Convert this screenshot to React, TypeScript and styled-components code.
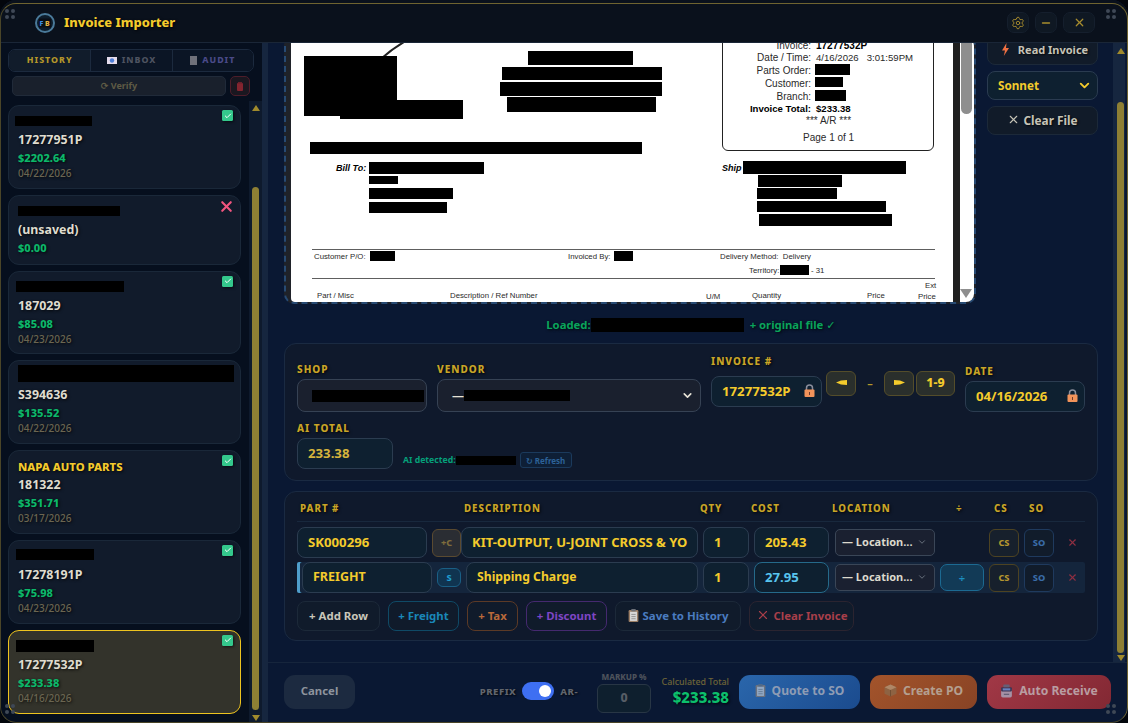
import React from "react";
import styled, { createGlobalStyle } from "styled-components";
import { Check, ChevronDown, Minus, Settings, X } from "lucide-react";

const FONT = `"Noto Sans", "DejaVu Sans", sans-serif`;
const GOLD = "#f4cb2c";

const Global = createGlobalStyle`
  html, body { margin: 0; padding: 0; background: #03060c; overflow: hidden; }
  #root { width: 1128px; height: 723px; }
  * { box-sizing: border-box; }
`;

const Frame = styled.div`
  position: relative;
  width: 1128px;
  height: 723px;
  display: flex;
  flex-direction: column;
  overflow: hidden;
  border-radius: 16px;
  background: #0a1833;
  font-family: ${FONT};
  font-weight: 700;
  color: #e6e2d6;
`;
const FrameEdge = styled.div`
  position: absolute;
  inset: 3px 0 0 0;
  border-radius: 16px;
  border: 1px solid transparent;
  border-top-color: #6f6430;
  border-left-color: #4a4528;
  border-right-color: #6f6430;
  border-bottom-color: #4a4528;
  pointer-events: none;
  z-index: 5;
`;
const Grip = styled.div<{ $pos: "tl" | "tr" | "bl" | "br" }>`
  position: absolute;
  z-index: 6;
  width: 10px;
  height: 10px;
  display: grid;
  grid-template-columns: 4px 4px;
  gap: 2px;
  ${(p) => (p.$pos[0] === "t" ? "top: 9px;" : "bottom: 9px;")}
  ${(p) => (p.$pos[1] === "l" ? "left: 5px;" : "right: 12px;")}
  span { width: 4px; height: 4px; border-radius: 50%; background: #3f4856; }
`;
const GripDots = ({ pos }: { pos: "tl" | "tr" | "bl" | "br" }) => (
  <Grip $pos={pos}><span /><span /><span /><span /></Grip>
);

const TitleBar = styled.header`
  height: 43px;
  flex: none;
  display: flex;
  align-items: center;
  padding: 3px 33px 0 35px;
  background: #0a111c;
  border-bottom: 1px solid #1a2637;
`;
const LogoMark = styled.svg`
  width: 20px;
  height: 20px;
  flex: none;
  margin-right: 9px;
`;
const AppTitle = styled.h1`
  margin: 0;
  flex: 1;
  padding-bottom: 2px;
  font-size: 12.9px;
  font-weight: 800;
  color: ${GOLD};
  text-shadow: 1px 1px 3px rgba(0, 0, 0, 0.85);
`;
const WinBtn = styled.button<{ $w: number }>`
  width: ${(p) => p.$w}px;
  height: 21px;
  margin-left: 6px;
  display: flex;
  align-items: center;
  justify-content: center;
  padding: 0;
  border-radius: 7px;
  background: #0f1823;
  border: 1px solid #151f2d;
  color: #a98d2e;
`;

const Body = styled.div`
  flex: 1;
  min-height: 0;
  display: flex;
`;
const Sidebar = styled.aside`
  width: 268px;
  flex: none;
  display: flex;
  flex-direction: column;
  background: #060f1e;
  border-right: 6px solid #16263f;
  overflow: hidden;
`;
const Tabs = styled.div`
  margin: 6px 8px 0;
  height: 23px;
  flex: none;
  display: grid;
  grid-template-columns: 1fr 1fr 1fr;
  border: 1px solid #1c2a3e;
  border-radius: 7px;
  overflow: hidden;
`;
const Tab = styled.div<{ $active?: boolean; $color: string }>`
  display: flex;
  align-items: center;
  justify-content: center;
  gap: 5px;
  padding-bottom: 1px;
  font-size: 8.8px;
  font-weight: 800;
  letter-spacing: 1px;
  color: ${(p) => p.$color};
  background: ${(p) => (p.$active ? "#111c2b" : "#0b1525")};
  & + & { border-left: 1px solid #1c2a3e; }
`;
const ToolRow = styled.div`
  margin: 4px 12px 0;
  height: 20px;
  flex: none;
  display: flex;
  gap: 4px;
`;
const VerifyBtn = styled.div`
  flex: 1;
  display: flex;
  align-items: center;
  justify-content: center;
  gap: 3px;
  padding-bottom: 2px;
  border-radius: 5px;
  background: #19202c;
  border: 1px solid #202a39;
  color: #5f5b45;
  font-size: 9px;
`;
const TrashBtn = styled.div`
  width: 20px;
  display: flex;
  align-items: center;
  justify-content: center;
  border-radius: 5px;
  background: #1a1720;
  border: 1px solid #4d1d2a;
`;
const ListArea = styled.div`
  flex: 1;
  min-height: 0;
  display: flex;
  margin-top: 5px;
`;
const CardList = styled.div`
  width: 241px;
  flex: none;
  display: flex;
  flex-direction: column;
  gap: 6px;
  padding: 4px 0 0 8px;
`;
const Card = styled.div<{ $selected?: boolean }>`
  position: relative;
  flex: none;
  padding: 7px 9px 7.8px;
  border-radius: 11px;
  border: 1px solid ${(p) => (p.$selected ? "#eec41f" : "#1a2839")};
  background: ${(p) => (p.$selected ? "#33332b" : "#111b2b")};
  text-shadow: 1px 1px 3px rgba(0, 0, 0, 0.8);
`;
const NameLine = styled.div`
  height: 16px;
  margin-bottom: 2px;
  display: flex;
  align-items: center;
  font-size: 11.3px;
  font-weight: 800;
  color: ${GOLD};
`;
const Redact = styled.span<{ $w: number; $h?: number; $dx?: number; $dy?: number }>`
  display: inline-block;
  flex: none;
  width: ${(p) => p.$w}px;
  height: ${(p) => p.$h ?? 11}px;
  margin-left: ${(p) => p.$dx ?? 0}px;
  margin-top: ${(p) => p.$dy ?? 0}px;
  background: #000;
`;
const PartNo = styled.div`
  height: 18px;
  line-height: 17px;
  font-size: 12.4px;
  color: #dfdccf;
`;
const Amount = styled.div`
  height: 16px;
  margin-top: 1px;
  line-height: 15px;
  font-size: 11px;
  font-weight: 800;
  color: #0cb86a;
`;
const CardDate = styled.div`
  height: 14px;
  line-height: 14px;
  font-size: 10px;
  font-weight: 500;
  color: #6b6651;
`;
const StatusOk = styled.span`
  position: absolute;
  top: 4px;
  right: 7px;
  width: 11px;
  height: 11px;
  display: flex;
  align-items: center;
  justify-content: center;
  border-radius: 1.5px;
  background: #34c88c;
  color: #fff;
  box-shadow: 1px 1px 3px rgba(0, 0, 0, 0.6);
`;
const StatusBad = styled.span`
  position: absolute;
  top: 2px;
  right: 5px;
  color: #f2557f;
  display: flex;
`;
const ScrollTrack = styled.div<{ $w: number; $bg: string; $left: number }>`
  width: ${(p) => p.$w}px;
  margin-left: ${(p) => p.$left}px;
  flex: none;
  position: relative;
  display: flex;
  flex-direction: column;
  align-items: center;
  background: ${(p) => p.$bg};
`;
const Arrow = styled.span<{ $dir: "up" | "down"; $color: string; $top: number; $left?: number }>`
  flex: none;
  width: 0;
  height: 0;
  margin-top: ${(p) => p.$top}px;
  margin-left: ${(p) => p.$left ?? 0}px;
  border-left: 4.5px solid transparent;
  border-right: 4.5px solid transparent;
  ${(p) =>
    p.$dir === "up"
      ? `border-bottom: 6px solid ${p.$color};`
      : `border-top: 6px solid ${p.$color};`}
`;
const Thumb = styled.div<{ $w: number; $top: number; $h: number; $left?: number; $color: string }>`
  flex: none;
  width: ${(p) => p.$w}px;
  height: ${(p) => p.$h}px;
  margin-top: ${(p) => p.$top}px;
  margin-left: ${(p) => p.$left ?? 0}px;
  border-radius: ${(p) => p.$w / 2}px;
  background: ${(p) => p.$color};
`;

const Main = styled.main`
  flex: 1;
  min-width: 0;
  display: flex;
  flex-direction: column;
`;
const ScrollArea = styled.div`
  flex: 1;
  min-height: 0;
  display: flex;
  overflow: hidden;
`;
const Content = styled.div`
  width: 830px;
  flex: none;
  padding-left: 16px;
  margin-top: -7px;
`;
const PreviewRow = styled.div`
  display: flex;
  gap: 11px;
`;
const Preview = styled.div`
  width: 692px;
  height: 268px;
  flex: none;
  display: flex;
  border: 2px dashed #274a73;
  border-radius: 10px;
  overflow: hidden;
  background: #1f2229;
`;
const DocCanvas = styled.div`
  position: relative;
  width: 662px;
  margin-left: 5px;
  background: #fff;
  overflow: hidden;
  font-family: "Liberation Sans", Arial, sans-serif;
  font-weight: 400;
  color: #222;
  border-bottom-left-radius: 4px;
`;
const DocScrollStrip = styled.div`
  width: 7px;
  flex: none;
  background: #1f1f1f;
`;
const DocScroll = styled.div`
  flex: 1;
  background: #fff;
  display: flex;
  flex-direction: column;
  align-items: center;
  position: relative;
`;
const DocThumb = styled.div`
  width: 11px;
  height: 76px;
  margin-left: -1px;
  border-radius: 0 0 6px 6px;
  background: #8e8e8e;
`;
const DocArrow = styled.span`
  position: absolute;
  bottom: 4px;
  left: 0;
  width: 0;
  height: 0;
  border-left: 6.5px solid transparent;
  border-right: 6.5px solid transparent;
  border-top: 9px solid #8e8e8e;
`;
const Black = styled.i<{ $l: number; $t: number; $r: number; $b: number }>`
  position: absolute;
  left: ${(p) => p.$l - 291}px;
  top: ${(p) => p.$t - 38}px;
  width: ${(p) => p.$r - p.$l}px;
  height: ${(p) => p.$b - p.$t}px;
  background: #000;
`;
const DocLine = styled.i<{ $y: number }>`
  position: absolute;
  left: ${312 - 291}px;
  width: 623px;
  top: ${(p) => p.$y - 38}px;
  height: 1px;
  background: #5e5e5e;
`;
const DocText = styled.span<{
  $x?: number;
  $rx?: number;
  $y: number;
  $s?: number;
  $bold?: boolean;
  $italic?: boolean;
}>`
  position: absolute;
  ${(p) => (p.$rx !== undefined ? `right: ${953 - p.$rx}px;` : `left: ${(p.$x ?? 291) - 291}px;`)}
  top: ${(p) => p.$y - 38 - 7}px;
  height: 14px;
  line-height: 14px;
  white-space: pre;
  font-size: ${(p) => p.$s ?? 7.8}px;
  font-weight: ${(p) => (p.$bold ? 700 : 400)};
  font-style: ${(p) => (p.$italic ? "italic" : "normal")};
  color: ${(p) => (p.$bold ? "#000" : "#2a2a2a")};
`;
const DocBox = styled.div`
  position: absolute;
  left: ${722 - 291}px;
  top: -12px;
  width: 212px;
  height: ${151 - 38 + 12}px;
  border: 1px solid #222;
  border-radius: 6px;
`;
const LogoCurve = styled.svg`
  position: absolute;
  left: ${380 - 291}px;
  top: 2px;
  width: 30px;
  height: 20px;
`;
const RightCol = styled.div`
  width: 111px;
  flex: none;
  display: flex;
  flex-direction: column;
  gap: 6px;
`;
const SideBtn = styled.div<{ $h: number; $gap: number; $fs: number; $inset?: number }>`
  height: ${(p) => p.$h}px;
  display: flex;
  align-items: center;
  justify-content: center;
  gap: ${(p) => p.$gap}px;
  padding: 0 0 2px ${(p) => p.$inset ?? 0}px;
  font-size: ${(p) => p.$fs}px;
  color: #c6c3b7;
  border-radius: 8px;
  background: #111b29;
  border: 1px solid #1c2939;
  text-shadow: 1px 1px 2px rgba(0, 0, 0, 0.8);
`;
const ModelSelect = styled.div`
  height: 29px;
  display: flex;
  align-items: center;
  justify-content: space-between;
  padding: 0 5px 1px 10px;
  font-size: 11.7px;
  color: ${GOLD};
  border-radius: 8px;
  background: #0e2030;
  border: 1px solid #2a3b50;
`;
const LoadedLine = styled.div`
  width: 814px;
  height: 18px;
  margin: 12px 0 9px;
  padding-bottom: 2px;
  display: flex;
  align-items: center;
  justify-content: center;
  font-size: 11.3px;
  color: #0aa45c;
  text-shadow: 1px 1px 3px rgba(0, 0, 0, 0.8);
`;
const LoadedBar = styled(Redact)`
  margin-right: 6px;
  margin-top: 2px;
`;
const Panel = styled.section`
  width: 814px;
  border-radius: 12px;
  background: #0f192c;
  border: 1px solid #1a2a42;
  padding: 0 12px;
`;
const InfoPanel = styled(Panel)`
  height: 138px;
  padding-top: 12px;
  margin-bottom: 10px;
  display: flex;
  flex-direction: column;
  gap: 10px;
`;
const FieldRow = styled.div`
  height: 56px;
  display: flex;
  align-items: flex-end;
  gap: 10px;
`;
const Field = styled.div`
  display: flex;
  flex-direction: column;
  gap: 4px;
`;
const Label = styled.label`
  display: block;
  height: 12px;
  line-height: 12px;
  font-size: 10px;
  font-weight: 800;
  letter-spacing: 1px;
  white-space: nowrap;
  color: #c9a527;
  text-shadow: 1px 1px 3px rgba(0, 0, 0, 0.9);
`;
const GreyBox = styled.div<{ $w: number }>`
  width: ${(p) => p.$w}px;
  height: 33px;
  display: flex;
  align-items: center;
  justify-content: space-between;
  padding: 0 6px 0 14px;
  border-radius: 8px;
  background: #1a202e;
  border: 1px solid #364254;
  color: #e6e2d6;
  font-size: 12px;
`;
const VendorValue = styled.span`
  display: flex;
  align-items: center;
`;
const GoldInput = styled.div<{ $w: number; $h?: number; $color?: string; $border?: string; $fs?: number }>`
  width: ${(p) => p.$w}px;
  height: ${(p) => p.$h ?? 31}px;
  flex: none;
  display: flex;
  align-items: center;
  justify-content: space-between;
  padding: 0 6px 2px 10px;
  border-radius: 8px;
  white-space: nowrap;
  overflow: hidden;
  background: #0e2030;
  border: 1px solid ${(p) => p.$border ?? "#2b3c50"};
  color: ${(p) => p.$color ?? GOLD};
  font-size: ${(p) => p.$fs ?? 13.2}px;
`;
const InvoiceRow = styled.div`
  display: flex;
  align-items: flex-start;
  gap: 4px;
  height: 41px;
`;
const InvoiceBox = styled(GoldInput)`
  margin-top: 5px;
`;
const NavBtn = styled.div<{ $w: number; $left?: number }>`
  width: ${(p) => p.$w}px;
  height: 25px;
  flex: none;
  margin-left: ${(p) => p.$left ?? 0}px;
  padding-bottom: 2px;
  display: flex;
  align-items: center;
  justify-content: center;
  border-radius: 6px;
  background: #2a2f2c;
  border: 1px solid #544d2a;
  color: ${GOLD};
  font-size: 12.4px;
  font-weight: 800;
`;
const NavDash = styled.span`
  width: 20px;
  text-align: center;
  line-height: 25px;
  color: #b6982a;
  font-size: 11px;
`;
const AiRow = styled.div`
  display: flex;
  align-items: flex-end;
  gap: 10px;
`;
const AiDetected = styled.div`
  display: flex;
  align-items: center;
  height: 18px;
  font-size: 8.7px;
  color: #05a07a;
`;
const RefreshBtn = styled.div`
  width: 52px;
  height: 16px;
  margin-left: 4px;
  display: flex;
  align-items: center;
  justify-content: center;
  gap: 1px;
  border-radius: 3px;
  border: 1px solid #1b3a5c;
  background: #0e1f36;
  color: #2d6298;
  font-size: 8px;
`;
const TablePanel = styled(Panel)`
  height: 150px;
  padding-top: 9px;
`;
const HeadRow = styled.div`
  height: 21px;
  display: flex;
  padding-top: 2px;
  margin-bottom: 5px;
  border-bottom: 1px solid #18283d;
`;
const HeadCell = styled(Label)<{ $w: number; $inset?: number }>`
  width: ${(p) => p.$w}px;
  flex: none;
  font-size: 9.7px;
  padding-left: ${(p) => p.$inset ?? 0}px;
`;
const LineRow = styled.div<{ $freight?: boolean }>`
  height: 31px;
  display: flex;
  align-items: center;
  gap: 5px;
  margin-bottom: 4px;
  ${(p) =>
    p.$freight
      ? `background: #14253c; box-shadow: inset 3px 0 0 #4f9ecb; border-radius: 2px; padding-left: 5px;`
      : ""}
`;
const TagBtn = styled.div<{ $w: number; $h: number; $bg: string; $bd: string; $c: string; $overlap?: boolean }>`
  width: ${(p) => p.$w}px;
  height: ${(p) => p.$h}px;
  flex: none;
  display: flex;
  align-items: center;
  justify-content: center;
  padding-bottom: 1px;
  border-radius: 6px;
  font-size: 9.2px;
  font-weight: 800;
  background: ${(p) => p.$bg};
  border: 1px solid ${(p) => p.$bd};
  color: ${(p) => p.$c};
  ${(p) => (p.$overlap ? "margin-right: -5px;" : "")}
`;
const LocationSel = styled.div`
  width: 100px;
  height: 27px;
  flex: none;
  margin-left: 1px;
  display: flex;
  align-items: center;
  justify-content: space-between;
  padding: 0 7px 2px 6px;
  border-radius: 5px;
  background: #1a2030;
  border: 1px solid #3a4657;
  color: #dcd9cd;
  font-size: 11px;
  white-space: nowrap;
`;
const SplitBtn = styled.div<{ $hidden?: boolean }>`
  width: 44px;
  height: 27px;
  flex: none;
  display: flex;
  align-items: center;
  justify-content: center;
  border-radius: 7px;
  font-size: 11px;
  visibility: ${(p) => (p.$hidden ? "hidden" : "visible")};
  color: #1c8fc0;
  background: #123a56;
  border: 1px solid #1c6a92;
`;
const RemoveCell = styled.div`
  width: 26px;
  flex: none;
  display: flex;
  justify-content: center;
  color: #8f2f42;
`;
const ActionRow = styled.div`
  display: flex;
  gap: 8px;
  margin-top: 8px;
`;
const ActionBtn = styled.div<{ $w: number; $c: string; $bd: string }>`
  width: ${(p) => p.$w}px;
  height: 30px;
  flex: none;
  display: flex;
  align-items: center;
  justify-content: center;
  gap: 4px;
  padding-bottom: 2px;
  font-size: 11.4px;
  border-radius: 8px;
  color: ${(p) => p.$c};
  background: #101b2b;
  border: 1px solid ${(p) => p.$bd};
  white-space: nowrap;
`;
const Footer = styled.footer`
  height: 61px;
  flex: none;
  display: flex;
  align-items: center;
  padding: 0 17px 2px 16px;
  border-top: 1px solid #16253c;
  background: #0a1833;
`;
const CancelBtn = styled.div`
  width: 71px;
  height: 34px;
  margin-right: auto;
  padding-bottom: 3px;
  display: flex;
  align-items: center;
  justify-content: center;
  border-radius: 11px;
  background: #1c2a40;
  color: #8e949d;
  font-size: 11.4px;
`;
const PrefixGroup = styled.div`
  display: flex;
  align-items: center;
  gap: 6px;
  margin-right: 19px;
  margin-bottom: 2px;
  font-size: 9.6px;
  font-weight: 800;
  letter-spacing: 0.5px;
  color: #62666e;
  text-shadow: 1px 1px 2px rgba(0, 0, 0, 0.8);
`;
const Toggle = styled.div`
  width: 32px;
  height: 18px;
  padding: 3px;
  display: flex;
  justify-content: flex-end;
  border-radius: 9px;
  background: #3e6ff2;
  span { width: 12px; height: 12px; border-radius: 50%; background: #fff; }
`;
const MarkupGroup = styled.div`
  width: 54px;
  margin-right: 10px;
  display: flex;
  flex-direction: column;
  align-items: center;
  gap: 2px;
  font-size: 8.1px;
  font-weight: 800;
  color: #4d525b;
  white-space: nowrap;
`;
const MarkupBox = styled.div`
  width: 54px;
  height: 29px;
  display: flex;
  align-items: center;
  justify-content: center;
  padding-bottom: 2px;
  border-radius: 6px;
  background: #0e1f2e;
  border: 1px solid #283645;
  color: #565d66;
  font-size: 12.4px;
`;
const TotalGroup = styled.div`
  width: 68px;
  margin-right: 10px;
  margin-bottom: 2px;
  display: flex;
  flex-direction: column;
  align-items: flex-end;
  line-height: 11px;
  font-size: 8.9px;
  font-weight: 500;
  color: #6e6438;
  white-space: nowrap;
  strong {
    font-size: 15px;
    font-weight: 800;
    line-height: 20px;
    color: #0cbf6c;
    text-shadow: 1px 1px 3px rgba(0, 0, 0, 0.8);
  }
`;
const DoBtn = styled.div<{ $w: number; $from: string; $to: string; $c: string; $mr?: number }>`
  width: ${(p) => p.$w}px;
  height: 34px;
  flex: none;
  margin-right: ${(p) => p.$mr ?? 0}px;
  padding-bottom: 3px;
  display: flex;
  align-items: center;
  justify-content: center;
  gap: 6px;
  border-radius: 11px;
  background: linear-gradient(135deg, ${(p) => p.$from}, ${(p) => p.$to});
  color: ${(p) => p.$c};
  font-size: 12.1px;
`;

/* small drawings */
const LockIcon = () => (
  <svg width="11" height="13" viewBox="0 0 11 13">
    <path d="M2.5 6V4a3 3 0 0 1 6 0v2" fill="none" stroke="#8a8e9c" strokeWidth="1.5" />
    <rect x="0.5" y="5.5" width="10" height="7.5" rx="1" fill="#f2935a" />
    <rect x="5" y="8" width="1" height="3" fill="#703a2a" />
  </svg>
);
const BoltIcon = () => (
  <svg width="9" height="13" viewBox="0 0 9 13">
    <path d="M5.5 0 1 7.5h3L2.8 13 8 5H5z" fill="#ef7042" />
  </svg>
);
const ClipIcon = ({ dim }: { dim?: boolean }) => (
  <svg width="11" height="13" viewBox="0 0 10 12" opacity={dim ? 0.6 : 1}>
    <rect x="0.5" y="1" width="9" height="11" rx="1" fill="#9c7f66" />
    <rect x="1.8" y="2.5" width="6.4" height="8.5" fill="#d8d8d8" />
    <rect x="3" y="0" width="4" height="2.2" fill="#6c7078" />
    <path d="M3 5h4M3 7h4M3 9h4" stroke="#8a8a8a" strokeWidth=".8" />
  </svg>
);
const BoxIcon = () => (
  <svg width="13" height="13" viewBox="0 0 12 12" opacity=".75">
    <path d="M6 0.5 11.5 3v6L6 11.5.5 9V3z" fill="#8a6a4c" />
    <path d="M6 5.5 11.5 3 6 .5.5 3z" fill="#b59a7c" />
    <path d="M6 5.5v6" stroke="#5a4632" strokeWidth=".7" />
  </svg>
);
const RobotIcon = () => (
  <svg width="13" height="14" viewBox="0 0 12 13" opacity=".85">
    <rect x="1" y="3.5" width="10" height="9" rx="1.5" fill="#a8a3b8" />
    <rect x="1" y="3" width="10" height="4" rx="1" fill="#2a3150" />
    <rect x="2.5" y="4" width="7" height="2" fill="#5f8fd8" />
    <rect x="3" y="0.5" width="6" height="2.5" rx="1" fill="#5d6780" />
    <rect x="3.5" y="9" width="5" height="1.2" fill="#5d6780" />
  </svg>
);
const MailIcon = () => (
  <svg width="10" height="7" viewBox="0 0 10 7">
    <rect width="10" height="7" fill="#e5dcec" />
    <circle cx="5" cy="3.5" r="2.2" fill="#4f7fd8" />
  </svg>
);
const AuditIcon = () => (
  <svg width="7" height="9" viewBox="0 0 7 9">
    <rect width="7" height="9" fill="#70717a" />
  </svg>
);
const TrashIcon = () => (
  <svg width="6" height="9" viewBox="0 0 6 9">
    <rect y="1" width="6" height="8" rx="1" fill="#83242f" />
    <rect x="1" width="4" height="1.5" fill="#6a1f2b" />
  </svg>
);
const NavArrow = ({ dir }: { dir: "left" | "right" }) => (
  <svg width="11" height="7" viewBox="0 0 11 7">
    <path
      d={dir === "right" ? "M0 1 6 1.5 11 3.5 6 5.5 0 6z" : "M11 1 5 1.5 0 3.5 5 5.5 11 6z"}
      fill={GOLD}
    />
  </svg>
);

const cards = [
  { bar: <Redact $w={77} $h={10} $dx={-3} $dy={-1} />, part: "17277951P", amt: "$2202.64", date: "04/22/2026" },
  { bar: <Redact $w={102} $h={10} />, part: "(unsaved)", amt: "$0.00", bad: true },
  { bar: <Redact $w={108} $dx={-2} />, part: "187029", amt: "$85.08", date: "04/23/2026" },
  { bar: <Redact $w={216} $h={17} $dy={-5} />, part: "S394636", amt: "$135.52", date: "04/22/2026", hidden: true },
  { name: "NAPA AUTO PARTS", part: "181322", amt: "$351.71", date: "03/17/2026" },
  { bar: <Redact $w={78} $dx={-2} $dy={-2} />, part: "17278191P", amt: "$75.98", date: "04/23/2026" },
  { bar: <Redact $w={78} $h={12} $dx={-2} $dy={1} />, part: "17277532P", amt: "$233.38", date: "04/16/2026", selected: true },
];

const blacks: [number, number, number, number][] = [
  [304, 56, 397, 116], [340, 100, 463, 119], [528, 51, 633, 65], [502, 67, 662, 80],
  [500, 82, 662, 96], [507, 97, 656, 112], [310, 142, 642, 154], [369, 162, 484, 174],
  [369, 176, 398, 184], [369, 188, 453, 199], [369, 202, 447, 213], [370, 251, 395, 261],
  [614, 251, 633, 261], [815, 64, 850, 75], [815, 77, 843, 87], [815, 90, 846, 101],
  [743, 161, 906, 174], [758, 175, 842, 187], [757, 188, 837, 199], [757, 201, 886, 212],
  [759, 214, 892, 226], [780, 265, 809, 275],
];

const boxLabels: [string, number, number, boolean?][] = [
  ["Invoice:", 45.5, 10],
  ["Date / Time:", 58, 10],
  ["Parts Order:", 70.5, 10],
  ["Customer:", 83.5, 10],
  ["Branch:", 96.5, 10],
  ["Invoice Total:", 109, 9.6, true],
];

export default function App() {
  return (
    <Frame>
      <Global />
      <FrameEdge />
      <GripDots pos="tl" />
      <GripDots pos="tr" />
      <GripDots pos="bl" />
      <GripDots pos="br" />
      <TitleBar>
        <LogoMark viewBox="0 0 20 20">
          <circle cx="10" cy="10" r="9" fill="#0d1d2c" stroke="#4a7a9a" strokeWidth="2" />
          <rect x="4" y="5.5" width="12" height="9" fill="#0a0e16" />
          <text x="4.5" y="13" fontSize="7" fontWeight="800" fontFamily="Noto Sans" fill="#3d8ee8">F</text>
          <text x="10" y="13" fontSize="7" fontWeight="800" fontFamily="Noto Sans" fill="#e4b542">B</text>
        </LogoMark>
        <AppTitle>Invoice Importer</AppTitle>
        <WinBtn $w={22}><Settings size={14} strokeWidth={1.6} /></WinBtn>
        <WinBtn $w={22}><Minus size={12} strokeWidth={2.8} /></WinBtn>
        <WinBtn $w={32}><X size={13} strokeWidth={2.2} /></WinBtn>
      </TitleBar>
      <Body>
        <Sidebar>
          <Tabs>
            <Tab $active $color="#b5972a">HISTORY</Tab>
            <Tab $color="#4e5360"><MailIcon />INBOX</Tab>
            <Tab $color="#4a4a88"><AuditIcon />AUDIT</Tab>
          </Tabs>
          <ToolRow>
            <VerifyBtn>⟳ Verify</VerifyBtn>
            <TrashBtn><TrashIcon /></TrashBtn>
          </ToolRow>
          <ListArea>
            <CardList>
              {cards.map((c) => (
                <Card key={c.part} $selected={c.selected}>
                  <NameLine>{c.bar ?? c.name}</NameLine>
                  <PartNo>{c.part}</PartNo>
                  <Amount>{c.amt}</Amount>
                  {c.date && <CardDate>{c.date}</CardDate>}
                  {c.bad ? (
                    <StatusBad><X size={17} strokeWidth={3} /></StatusBad>
                  ) : c.hidden ? null : (
                    <StatusOk><Check size={8} strokeWidth={3} /></StatusOk>
                  )}
                </Card>
              ))}
            </CardList>
            <ScrollTrack $w={13} $bg="#0e1a2d" $left={8}>
              <Arrow $dir="up" $color="#a08a2c" $top={4} />
              <Thumb $w={7} $top={76} $h={523} $color="#8e7f34" />
              <Arrow $dir="down" $color="#a08a2c" $top={5} />
            </ScrollTrack>
          </ListArea>
        </Sidebar>
        <Main>
          <ScrollArea>
            <Content>
              <PreviewRow>
                <Preview>
                  <DocCanvas>
                    <LogoCurve viewBox="0 0 30 20">
                      <path d="M2 18 Q12 9 24 2" fill="none" stroke="#222" strokeWidth="2" />
                    </LogoCurve>
                    {blacks.map(([l, t, r, b]) => (
                      <Black key={`${l}-${t}`} $l={l} $t={t} $r={r} $b={b} />
                    ))}
                    <DocLine $y={249} />
                    <DocLine $y={278} />
                    <DocBox />
                    {boxLabels.map(([t, y, s, bold]) => (
                      <DocText key={t} $rx={811} $y={y} $s={s} $bold={bold}>{t}</DocText>
                    ))}
                    <DocText $x={816} $y={45.5} $s={10} $bold>17277532P</DocText>
                    <DocText $x={816} $y={58} $s={9.6}>{"4/16/2026   3:01:59PM"}</DocText>
                    <DocText $x={816} $y={109} $s={9.6} $bold>$233.38</DocText>
                    <DocText $x={806} $y={121} $s={10}>*** A/R ***</DocText>
                    <DocText $x={803} $y={137.5} $s={10}>Page 1 of 1</DocText>
                    <DocText $x={336} $y={168} $s={9} $bold $italic>Bill To:</DocText>
                    <DocText $x={722} $y={168} $s={9} $bold $italic>Ship</DocText>
                    <DocText $x={314} $y={256.5}>Customer P/O:</DocText>
                    <DocText $x={568} $y={256.5}>Invoiced By:</DocText>
                    <DocText $x={720} $y={256.5}>{"Delivery Method:  Delivery"}</DocText>
                    <DocText $x={749} $y={270.5}>Territory:</DocText>
                    <DocText $x={811} $y={271}>- 31</DocText>
                    <DocText $x={317} $y={295.5}>Part / Misc</DocText>
                    <DocText $x={450} $y={295.5}>Description / Ref Number</DocText>
                    <DocText $x={706} $y={297}>U/M</DocText>
                    <DocText $x={752} $y={295.5}>Quantity</DocText>
                    <DocText $x={867} $y={295.5}>Price</DocText>
                    <DocText $x={925} $y={286}>Ext</DocText>
                    <DocText $x={918} $y={297}>Price</DocText>
                  </DocCanvas>
                  <DocScrollStrip />
                  <DocScroll>
                    <DocThumb />
                    <DocArrow />
                  </DocScroll>
                </Preview>
                <RightCol>
                  <SideBtn $h={29} $gap={8} $fs={11} $inset={4}><BoltIcon />Read Invoice</SideBtn>
                  <ModelSelect>Sonnet<ChevronDown size={15} strokeWidth={3} /></ModelSelect>
                  <SideBtn $h={29} $gap={3} $fs={11.8}><X size={13} strokeWidth={2} />Clear File</SideBtn>
                </RightCol>
              </PreviewRow>
              <LoadedLine>
                Loaded:<LoadedBar $w={153} $h={14} />+ original file ✓
              </LoadedLine>
              <InfoPanel>
                <FieldRow>
                  <Field>
                    <Label>SHOP</Label>
                    <GreyBox $w={130}><Redact $w={112} $h={12} /></GreyBox>
                  </Field>
                  <Field>
                    <Label>VENDOR</Label>
                    <GreyBox $w={264}>
                      <VendorValue>—<Redact $w={106} $h={11} /></VendorValue>
                      <ChevronDown size={13} strokeWidth={3} />
                    </GreyBox>
                  </Field>
                  <Field>
                    <Label>INVOICE #</Label>
                    <InvoiceRow>
                      <InvoiceBox $w={111}>17277532P<LockIcon /></InvoiceBox>
                      <NavBtn $w={30}><NavArrow dir="left" /></NavBtn>
                      <NavDash>–</NavDash>
                      <NavBtn $w={30}><NavArrow dir="right" /></NavBtn>
                      <NavBtn $w={39} $left={-2}>1-9</NavBtn>
                    </InvoiceRow>
                  </Field>
                  <Field>
                    <Label>DATE</Label>
                    <GoldInput $w={120}>04/16/2026<LockIcon /></GoldInput>
                  </Field>
                </FieldRow>
                <AiRow>
                  <Field>
                    <Label>AI TOTAL</Label>
                    <GoldInput $w={96} $color="#d5b43c">233.38</GoldInput>
                  </Field>
                  <AiDetected>
                    AI detected:<Redact $w={60} $h={9} />
                    <RefreshBtn>↻ Refresh</RefreshBtn>
                  </AiDetected>
                </AiRow>
              </InfoPanel>
              <TablePanel>
                <HeadRow>
                  <HeadCell $w={167} $inset={3}>PART #</HeadCell>
                  <HeadCell $w={236}>DESCRIPTION</HeadCell>
                  <HeadCell $w={51}>QTY</HeadCell>
                  <HeadCell $w={81}>COST</HeadCell>
                  <HeadCell $w={124}>LOCATION</HeadCell>
                  <HeadCell $w={38}>÷</HeadCell>
                  <HeadCell $w={35}>CS</HeadCell>
                  <HeadCell $w={30}>SO</HeadCell>
                </HeadRow>
                <LineRow>
                  <GoldInput $w={130}>SK000296</GoldInput>
                  <TagBtn $w={29} $h={28} $bg="#2a2d33" $bd="#5a4a30" $c="#7e6c3c" $overlap>+C</TagBtn>
                  <GoldInput $w={237} $fs={13}>KIT-OUTPUT, U-JOINT CROSS &amp; YO</GoldInput>
                  <GoldInput $w={46}>1</GoldInput>
                  <GoldInput $w={75}>205.43</GoldInput>
                  <LocationSel>— Location...<ChevronDown size={10} color="#77808c" /></LocationSel>
                  <SplitBtn $hidden>÷</SplitBtn>
                  <TagBtn $w={30} $h={28} $bg="#17202c" $bd="#4d4322" $c="#b4952f">CS</TagBtn>
                  <TagBtn $w={30} $h={28} $bg="#111c2b" $bd="#1f3a5e" $c="#3a6ca8">SO</TagBtn>
                  <RemoveCell><X size={11} strokeWidth={2.4} /></RemoveCell>
                </LineRow>
                <LineRow $freight>
                  <GoldInput $w={130} $fs={12.5}>FREIGHT</GoldInput>
                  <TagBtn $w={24} $h={19} $bg="#103450" $bd="#1a5f85" $c="#1f9cd0">S</TagBtn>
                  <GoldInput $w={232} $fs={12.2}>Shipping Charge</GoldInput>
                  <GoldInput $w={46}>1</GoldInput>
                  <GoldInput $w={75} $color="#58c4ee" $border="#256a8a">27.95</GoldInput>
                  <LocationSel>— Location...<ChevronDown size={10} color="#77808c" /></LocationSel>
                  <SplitBtn>÷</SplitBtn>
                  <TagBtn $w={30} $h={28} $bg="#17202c" $bd="#4d4322" $c="#b4952f">CS</TagBtn>
                  <TagBtn $w={30} $h={28} $bg="#111c2b" $bd="#1f3a5e" $c="#3a6ca8">SO</TagBtn>
                  <RemoveCell><X size={11} strokeWidth={2.4} /></RemoveCell>
                </LineRow>
                <ActionRow>
                  <ActionBtn $w={83} $c="#c9c6ba" $bd="#1c2939">+ Add Row</ActionBtn>
                  <ActionBtn $w={71} $c="#1a88b8" $bd="#0f4a66">+ Freight</ActionBtn>
                  <ActionBtn $w={51} $c="#b9693a" $bd="#5c3a26">+ Tax</ActionBtn>
                  <ActionBtn $w={81} $c="#7e45c4" $bd="#45296f">+ Discount</ActionBtn>
                  <ActionBtn $w={126} $c="#4a7cc0" $bd="#1c2939"><ClipIcon />Save to History</ActionBtn>
                  <ActionBtn $w={105} $c="#a83f4a" $bd="#2b2430"><X size={14} strokeWidth={2} />Clear Invoice</ActionBtn>
                </ActionRow>
              </TablePanel>
            </Content>
            <ScrollTrack $w={12} $bg="#16263f" $left={15}>
              <Arrow $dir="up" $color="#a08a2c" $top={5} $left={3} />
              <Thumb $w={7} $top={48} $h={551} $left={3} $color="#8e7f34" />
              <Arrow $dir="down" $color="#a08a2c" $top={2} $left={3} />
            </ScrollTrack>
          </ScrollArea>
          <Footer>
            <CancelBtn>Cancel</CancelBtn>
            <PrefixGroup>PREFIX<Toggle><span /></Toggle>AR-</PrefixGroup>
            <MarkupGroup>MARKUP %<MarkupBox>0</MarkupBox></MarkupGroup>
            <TotalGroup>Calculated Total<strong>$233.38</strong></TotalGroup>
            <DoBtn $w={121} $mr={10} $from="#2a66ab" $to="#1b4b8e" $c="#8e9cb4"><ClipIcon dim />Quote to SO</DoBtn>
            <DoBtn $w={107} $mr={10} $from="#a3542b" $to="#884325" $c="#b4a091"><BoxIcon />Create PO</DoBtn>
            <DoBtn $w={124} $from="#a13846" $to="#822833" $c="#b99da2"><RobotIcon />Auto Receive</DoBtn>
          </Footer>
        </Main>
      </Body>
    </Frame>
  );
}
